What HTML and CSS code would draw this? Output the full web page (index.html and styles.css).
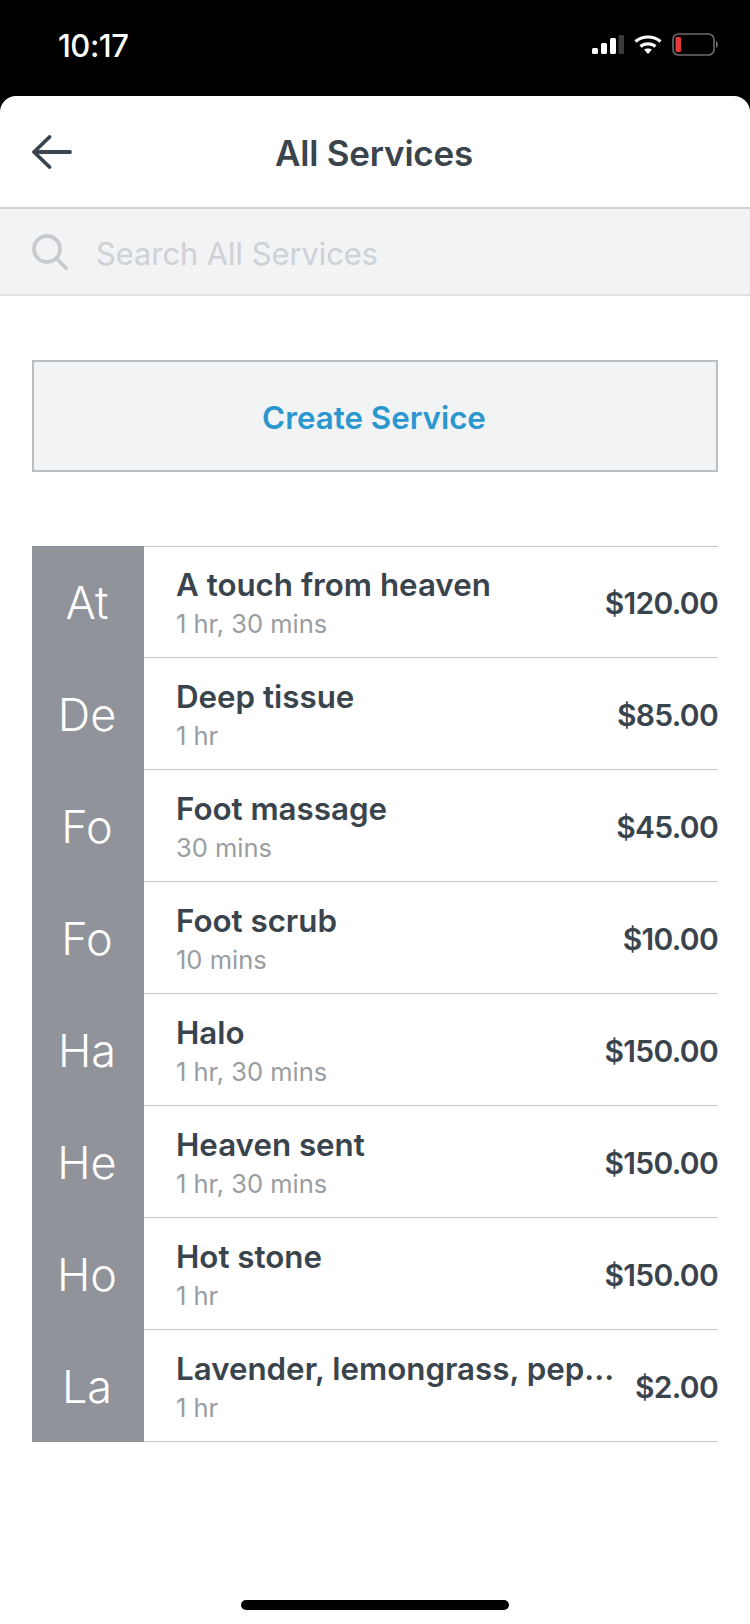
FILE: index.html
```html
<!DOCTYPE html>
<html lang="en">
<head>
<meta charset="utf-8">
<title>All Services</title>
<link rel="stylesheet" href="styles.css">
</head>
<body>
<div class="phone">
  <div class="status">
    <span class="time">10:17</span>
    <div class="status-icons">
      <svg class="signal" width="32" height="19" viewBox="0 0 32 19"><rect x="0" y="13" width="6" height="6" rx="1.500" fill="#fff"/><rect x="9" y="8" width="6" height="11" rx="1.500" fill="#fff"/><rect x="18" y="3" width="6" height="16" rx="1.500" fill="#fff"/><rect x="26.500" y="0" width="5.500" height="19" rx="1.500" fill="#3a3a3a"/></svg>
      <svg class="wifi" width="28" height="19" viewBox="0 0 28 19"><path d="M1.500 6.500C8.500 0.500 19.500 0.500 26.500 6.500" fill="none" stroke="#fff" stroke-width="3.200"/><path d="M6.500 11.500C10.500 8 17.500 8 21.500 11.500" fill="none" stroke="#fff" stroke-width="3.200"/><path d="M10 14.500L14 19L18 14.500C16 13 12 13 10 14.500Z" fill="#fff"/></svg>
      <svg class="battery" width="47" height="23" viewBox="0 0 47 23"><rect x="1" y="1" width="41" height="21" rx="5.500" fill="none" stroke="#6b6b6b" stroke-width="1.600"/><rect x="3.500" y="4" width="5.500" height="15" rx="1.500" fill="#e5383b"/><path d="M44 8C46.500 9 46.500 14 44 15Z" fill="#6b6b6b"/></svg>
    </div>
  </div>
  <main class="sheet">
    <header class="nav">
      <svg class="back" width="40" height="34" viewBox="0 0 40 34"><path d="M38 17H2.500M17.500 2L2 17L17.500 32" fill="none" stroke="#3a444d" stroke-width="3.800" stroke-linecap="round" stroke-linejoin="round"/></svg>
      <h1>All Services</h1>
    </header>
    <div class="search">
      <svg width="36" height="36" viewBox="0 0 36 36"><circle cx="15" cy="15" r="13" fill="none" stroke="#c8cbce" stroke-width="3.800"/><path d="M24.500 24.500L34 34" stroke="#c8cbce" stroke-width="3.800" stroke-linecap="round"/></svg>
      <span>Search All Services</span>
    </div>
    <button class="create">Create Service</button>
    <ul class="list">
      <li class="row"><div class="abbr">At</div><div class="body"><div class="info"><div class="name">A touch from heaven</div><div class="dur">1 hr, 30 mins</div></div><div class="price">$120.00</div></div></li>
      <li class="row"><div class="abbr">De</div><div class="body"><div class="info"><div class="name">Deep tissue</div><div class="dur">1 hr</div></div><div class="price">$85.00</div></div></li>
      <li class="row"><div class="abbr">Fo</div><div class="body"><div class="info"><div class="name">Foot massage</div><div class="dur">30 mins</div></div><div class="price">$45.00</div></div></li>
      <li class="row"><div class="abbr">Fo</div><div class="body"><div class="info"><div class="name">Foot scrub</div><div class="dur">10 mins</div></div><div class="price">$10.00</div></div></li>
      <li class="row"><div class="abbr">Ha</div><div class="body"><div class="info"><div class="name">Halo</div><div class="dur">1 hr, 30 mins</div></div><div class="price">$150.00</div></div></li>
      <li class="row"><div class="abbr">He</div><div class="body"><div class="info"><div class="name">Heaven sent</div><div class="dur">1 hr, 30 mins</div></div><div class="price">$150.00</div></div></li>
      <li class="row"><div class="abbr">Ho</div><div class="body"><div class="info"><div class="name">Hot stone</div><div class="dur">1 hr</div></div><div class="price">$150.00</div></div></li>
      <li class="row"><div class="abbr">La</div><div class="body"><div class="info"><div class="name">Lavender, lemongrass, pep...</div><div class="dur">1 hr</div></div><div class="price">$2.00</div></div></li>
    </ul>
    <div class="home"></div>
  </main>
</div>
</body>
</html>
```
FILE: styles.css
```css
* { box-sizing: border-box; }
html, body { margin: 0; padding: 0; background: #000; }
body { font-family: "Inter", "Liberation Sans", sans-serif; color: #3a444d; }
.phone { width: 750px; height: 1624px; display: flex; flex-direction: column; overflow: hidden; }
.status { height: 96px; flex: none; background: #000; color: #fff; display: flex; justify-content: space-between; align-items: flex-start; padding: 29px 31px 0 58px; }
.time { font: 500 31px/34px "Inter", sans-serif; letter-spacing: -0.5px; }
.status-icons { display: flex; align-items: center; gap: 10px; padding: 4px 0 0; }
.sheet { flex: 1; background: #fff; border-radius: 16px 16px 0 0; display: flex; flex-direction: column; }
.nav { height: 111px; flex: none; position: relative; display: flex; align-items: center; justify-content: center; padding: 2px 2px 0 0; }
.back { position: absolute; left: 32px; top: 39px; }
h1 { margin: 0; font-size: 35px; font-weight: 600; letter-spacing: -0.2px; }
.search { height: 89px; flex: none; background: #f1f3f5; border-top: 2px solid #cfd2d5; border-bottom: 2px solid #dfe1e3; display: flex; align-items: center; gap: 28px; padding-left: 32px; font-size: 30.800px; color: #ced1d5; }
.search span { padding-top: 4px; }
.create { margin: 64px 32px 0; height: 112px; flex: none; background: #f1f3f5; border: 2px solid #b9bec3; color: #2b97cf; font: 600 31.300px "Inter", sans-serif; padding: 4px 2px 0 0; }
.list { list-style: none; margin: 74px 32px 0; padding: 0; }
.row { display: flex; height: 112px; }
.row:first-child { height: 111px; }
.row:last-child { height: 113px; }
.abbr { width: 112px; flex: none; background: #90949a; color: #fff; font-size: 45px; font-weight: 300; display: flex; align-items: center; justify-content: center; padding: 2px 2px 0 0; }
.body { flex: 1; min-width: 0; display: flex; align-items: center; justify-content: space-between; gap: 28px; padding-left: 32px; border-top: 1px solid #c6c8ca; }
.row:last-child .body { border-bottom: 1px solid #c6c8ca; }
.info { min-width: 0; flex: 1; padding-top: 3px; }
.name { font-size: 31.300px; font-weight: 600; line-height: 40px; white-space: nowrap; }
.dur { font-size: 25.500px; line-height: 37px; color: #9a9da1; }
.price { flex: none; font-size: 30px; font-weight: 600; letter-spacing: -0.700px; padding-top: 2px; }
.home { width: 268px; height: 10px; border-radius: 5px; background: #000; margin: auto auto 14px; }
```
